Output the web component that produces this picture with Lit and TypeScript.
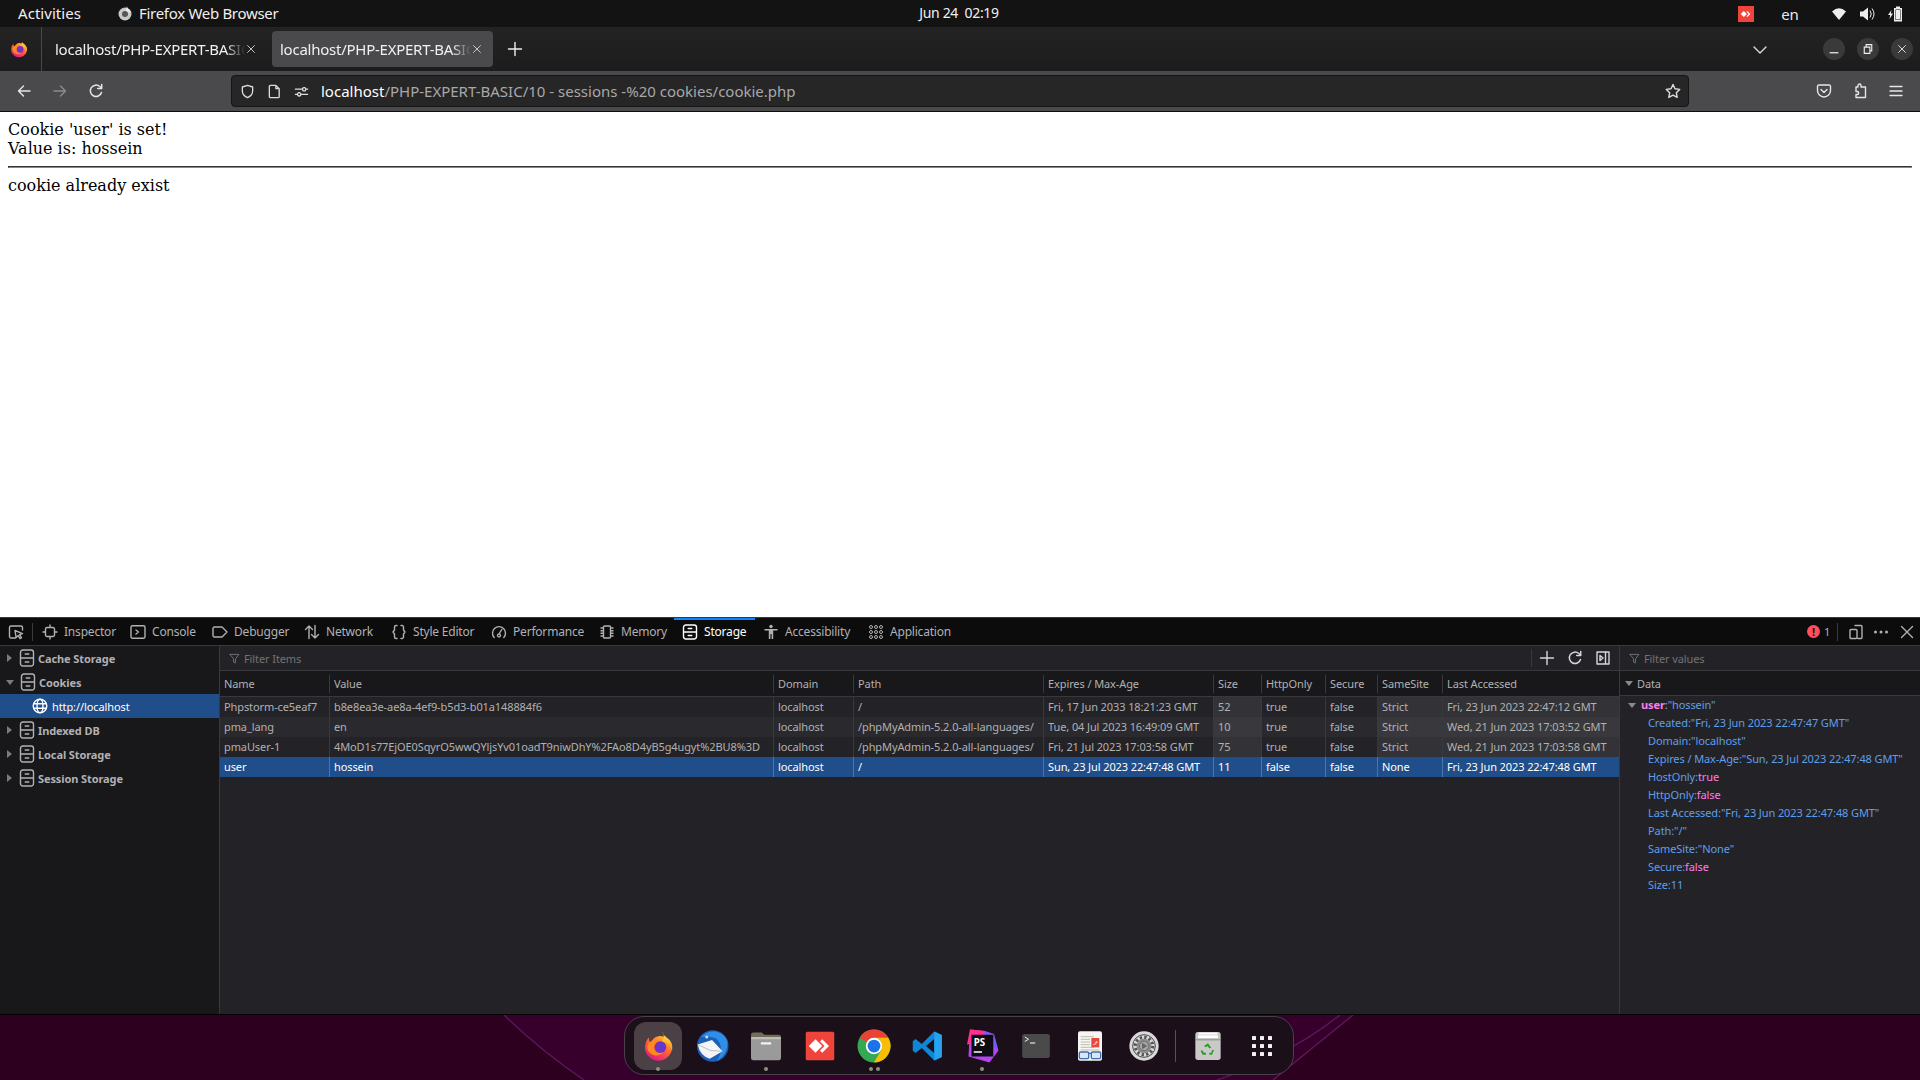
import { LitElement, html, css } from "lit";
import { customElement } from "lit/decorators.js";

const S = (d: string) => html`<svg class="ic" viewBox="0 0 16 16" fill="none" stroke="currentColor" stroke-width="1.4" stroke-linecap="round" stroke-linejoin="round"><path d=${d}></path></svg>`;

const icons: Record<string, any> = {
  pick: S("M7.5 14H3A1.5 1.5 0 0 1 1.500 12.500V3.500A1.500 1.500 0 0 1 3 2h10a1.500 1.500 0 0 1 1.500 1.500V6M7 6.500l7.500 3.200-3 1 2 3-1.400.9-2-3-2 1.900z"),
  inspector: S("M8 1v2.500M8 12.500V15M1 8h2.500M12.500 8H15M5 3.500h6A1.500 1.500 0 0 1 12.500 5v6a1.500 1.500 0 0 1-1.500 1.500H5A1.500 1.500 0 0 1 3.500 11V5A1.500 1.500 0 0 1 5 3.500z"),
  console: S("M2.500 1.800h11a1.500 1.500 0 0 1 1.500 1.500v9.400a1.500 1.500 0 0 1-1.500 1.500h-11A1.500 1.500 0 0 1 1 12.700V3.300a1.500 1.500 0 0 1 1.500-1.500zM6 6l2.500 2L6 10"),
  debugger: S("M2.500 3h7.500l5 5-5 5H2.500a1.500 1.500 0 0 1-1.500-1.500v-7A1.500 1.500 0 0 1 2.500 3z"),
  network: S("M5 14.500V2M1.500 5.500L5 2l3.500 3.500M11 1.500V14M7.500 10.500L11 14l3.500-3.500"),
  style: S("M6 1.500H5a1.500 1.500 0 0 0-1.500 1.500v3L2 8l1.500 2v3A1.500 1.500 0 0 0 5 14.500h1M10 1.500h1A1.500 1.500 0 0 1 12.500 3v3L14 8l-1.500 2v3a1.500 1.500 0 0 1-1.500 1.500h-1"),
  perf: S("M3.200 13.500A6.500 6.500 0 1 1 12.800 13.500M8 10l2.800-4.500M8 10a1.500 1.500 0 1 0 .01 0"),
  memory: S("M5.500 2h5a1 1 0 0 1 1 1v10a1 1 0 0 1-1 1h-5a1 1 0 0 1-1-1V3a1 1 0 0 1 1-1zM2 4h2.500M2 6.700h2.500M2 9.300h2.500M2 12h2.500M11.500 4H14M11.500 6.700H14M11.500 9.300H14M11.500 12H14"),
  storage: S("M3.800 1h8.400a2.300 2.300 0 0 1 2.300 2.300v9.400a2.300 2.300 0 0 1-2.300 2.300H3.800a2.300 2.300 0 0 1-2.300-2.300V3.300A2.300 2.300 0 0 1 3.800 1zM1.500 8h13M6.200 4.500h3.600M6.200 11.500h3.600"),
  app: html`<svg class="ic" viewBox="0 0 16 16" fill="none" stroke="currentColor" stroke-width="1">${[3, 8, 13].map((y) => [3, 8, 13].map((x) => html`<svg x=${x - 2} y=${y - 2} width="4" height="4" viewBox="0 0 4 4" overflow="visible"><circle cx="2" cy="2" r="1.500"></circle></svg>`))}</svg>`,
  access: html`<svg class="ic" viewBox="0 0 16 16" fill="currentColor"><circle cx="8" cy="2.500" r="1.700"></circle><path d="M1.500 5h13v1.500H10.200V15H8.600v-5H7.400v5H5.800V6.500H1.500z"></path></svg>`,
  funnel: S("M1.500 2h13L9.800 8 9 14.500l-2-1L6.300 8z"),
  reload: html`<svg class="ic" viewBox="0 0 16 16" fill="none" stroke="currentColor" stroke-width="1.500" stroke-linecap="round"><path d="M13.500 9.500A5.700 5.700 0 1 1 11.800 3.500l1.700 1.500"></path><path d="M13.700 1.500v4h-4" stroke-linejoin="round"></path></svg>`,
  plus: S("M8 1.500v13M1.500 8h13"),
  panel: S("M2 2h12v12H2zM10.500 2v12M5 5.500l3 2.500-3 2.500z"),
  device: S("M7 1.500h6a1 1 0 0 1 1 1v11a1 1 0 0 1-1 1h-3M3 5.500h5a1 1 0 0 1 1 1v7a1 1 0 0 1-1 1H3a1 1 0 0 1-1-1v-7a1 1 0 0 1 1-1z"),
  close: S("M2.500 2.500l11 11M13.500 2.500l-11 11"),
  back: S("M14 8H2.500M7.500 3l-5 5 5 5"),
  fwd: S("M2 8h11.500M8.500 3l5 5-5 5"),
  shield: S("M8 1.500l5.500 1.700v4.300c0 3.500-2.500 5.800-5.500 7-3-1.200-5.500-3.500-5.500-7V3.200z"),
  page: S("M3.500 1.500h6l3.500 3.500v8.500a1 1 0 0 1-1 1h-8.500a1 1 0 0 1-1-1v-11a1 1 0 0 1 1-1zM9.500 1.500V5H13"),
  perm: S("M1.500 5.500h7M13 5.500h1.500M1.500 11h1.500M8 11h6.500M10.800 3.800a1.800 1.800 0 1 0 .01 0M5.500 9.200a1.800 1.800 0 1 0 .01 0"),
  star: S("M8 1.500l2 4.300 4.700.6-3.400 3.300.9 4.700L8 12.100l-4.200 2.300.9-4.700L1.300 6.400 6 5.800z"),
  pocket: S("M2.800 2h10.400A1.300 1.300 0 0 1 14.500 3.300V7.500A6.500 6.500 0 0 1 1.500 7.500V3.300A1.300 1.300 0 0 1 2.800 2zM5 6.500l3 3 3-3"),
  ext: S("M6 2.500a1.500 1.500 0 0 1 3 0V4h4.500v10.500H4V11.500H5.200a1.500 1.500 0 0 0 0-3H4V4h2z"),
  burger: S("M2 3.500h12M2 8h12M2 12.500h12"),
  chev: S("M2 5l6 6 6-6"),
  globe: html`<svg class="ic" viewBox="0 0 16 16" fill="none" stroke="#fff" stroke-width="1.400"><circle cx="8" cy="8" r="6.800"></circle><ellipse cx="8" cy="8" rx="3" ry="6.800"></ellipse><path d="M1.500 5.700h13M1.500 10.300h13"></path></svg>`,
};

const firefox = (cls: string) => html`<svg class=${cls} viewBox="0 0 48 48">
  <defs>
    <linearGradient id="fxa" x1="0.85" y1="0.1" x2="0.3" y2="1"><stop offset="0" stop-color="#ffb72b"></stop><stop offset="0.5" stop-color="#ff5a3c"></stop><stop offset="1" stop-color="#e31587"></stop></linearGradient>
    <linearGradient id="fxb" x1="0.5" y1="0" x2="0.5" y2="1"><stop offset="0" stop-color="#ffe14a"></stop><stop offset="1" stop-color="#ff9a1f"></stop></linearGradient>
  </defs>
  <path d="M24 8C35 7 45 15 45 26C45 37 35 46 24 46C13 46 3 37 3 26C3 20 5 14 9 10C9 14 10 17 12 18C14 13 18 9 24 8Z" fill="url(#fxa)"></path>
  <path d="M30 1C31 8 38 9 42 15C45 19 46 24 45 30C42 22 36 17 29 16C33 12 33 6 30 1Z" fill="url(#fxb)"></path>
  <circle cx="27" cy="25" r="9" fill="#6a35c9"></circle>
  <path d="M7 22C10 15 18 12 26 15C20 16 17 20 17 25C17 32 24 36 31 33C26 40 14 39 9 32C7 29 6 25 7 22Z" fill="#ff8a1f"></path>
</svg>`;

const dock: Record<string, any> = {
  thunderbird: html`<svg class="di" viewBox="0 0 48 48"><circle cx="25" cy="24" r="21" fill="#1d5fb8"></circle><path d="M10 12C18 2 36 1 44 16C46 26 42 38 30 44C38 34 38 22 30 14C22 10 14 12 10 12Z" fill="#2f8fe6"></path><path d="M5 22L24 16L38 31L21 41Q8 37 5 22Z" fill="#f4f4f4"></path><path d="M5 22L22 30L38 31" fill="none" stroke="#aab" stroke-width="1"></path><circle cx="17" cy="12" r="2" fill="#cde"></circle></svg>`,
  folder: html`<svg class="di" viewBox="0 0 48 48"><path d="M4 9a3 3 0 0 1 3-3h11l4 3h19a3 3 0 0 1 3 3v10H4z" fill="#6f6e58"></path><rect x="4" y="12" width="40" height="31" rx="3" fill="#9a9a9a"></rect><rect x="4" y="12" width="40" height="3" rx="1.500" fill="#bdbdb8"></rect><rect x="17" y="19" width="14" height="3" rx="1" fill="#f2f2f2"></rect></svg>`,
  anydesk: html`<svg class="di" viewBox="0 0 48 48"><rect x="5" y="5" width="38" height="38" rx="2" fill="#ef443b"></rect><path d="M18 15L27 24L18 33L9 24Z" fill="#fff"></path><path d="M27 15L36 24L27 33L24 30L30 24L24 18Z" fill="#fff"></path></svg>`,
  chrome: html`<svg class="di" viewBox="0 0 48 48"><circle cx="24" cy="24" r="22" fill="#34a853"></circle><path d="M24 2A22 22 0 0 1 43.100 13H24A11 11 0 0 0 14.500 18.500L5 13A22 22 0 0 1 24 2Z" fill="#ea4335"></path><path d="M43.100 13A22 22 0 0 1 24 46L33.500 29.500A11 11 0 0 0 33.500 18.500 11 11 0 0 0 24 13Z" fill="#fbbc05"></path><circle cx="24" cy="24" r="11" fill="#fff"></circle><circle cx="24" cy="24" r="8.500" fill="#1a73e8"></circle></svg>`,
  vscode: html`<svg class="di" viewBox="-2 -2 52 52"><path d="M33 3L44 8V40L33 45L15 27L6 34L2 31V17L6 14L15 21ZM33 14L21 24L33 34Z" fill="#0f86d6" fill-rule="evenodd"></path><path d="M33 3L44 8V40L33 45Z" fill="#25a3ee"></path></svg>`,
  phpstorm: html`<svg class="di" viewBox="0 0 48 48"><path d="M8 2L28 4L46 30L34 46L6 38Z" fill="#b345f1"></path><path d="M8 2L28 4L20 20L4 22Z" fill="#ff318c"></path><path d="M28 4L40 8L46 30L30 20Z" fill="#765af8"></path><rect x="10" y="9" width="29" height="29" fill="#0c0c12"></rect><text x="13" y="24" font-family="Noto Sans, sans-serif" font-size="13" font-weight="700" fill="#fff">PS</text><rect x="13" y="31" width="11" height="2" fill="#fff"></rect></svg>`,
  terminal: html`<svg class="di" viewBox="0 0 48 48"><rect x="5.500" y="8" width="37" height="32" rx="3" fill="#4a4a4a"></rect><path d="M9 12l5 3-5 3" fill="none" stroke="#eee" stroke-width="1.300"></path><path d="M16 20h7" stroke="#eee" stroke-width="1.500"></path></svg>`,
  gedit: html`<svg class="di" viewBox="-3 -3 54 54"><rect x="6" y="2" width="36" height="44" rx="3" fill="#f5f5f3"></rect><path d="M10 10h20M10 14h14M10 18h14M10 22h14M10 26h20M10 30h28" stroke="#b9b3a2" stroke-width="1.300"></path><rect x="26" y="12" width="12" height="14" fill="#e5493e"></rect><path d="M29 22q5-1 6-4q-2-2-3 1" fill="none" stroke="#fff" stroke-width="1.200"></path><rect x="8" y="33" width="14" height="10" rx="2" fill="#dbe6f2" stroke="#3f6fb0" stroke-width="2"></rect><rect x="26" y="33" width="14" height="10" rx="2" fill="#dbe6f2" stroke="#3f6fb0" stroke-width="2"></rect><path d="M22 35h4" stroke="#3f6fb0" stroke-width="2"></path></svg>`,
  settings: html`<svg class="di" viewBox="-3 -3 54 54"><circle cx="24" cy="24" r="22" fill="#d9d9d9"></circle><circle cx="24" cy="24" r="17" fill="none" stroke="#4a4a4a" stroke-width="1.500"></circle><circle cx="24" cy="24" r="13" fill="none" stroke="#555" stroke-width="5" stroke-dasharray="3.500 3.300"></circle><circle cx="24" cy="24" r="11" fill="#8c8c8c"></circle><circle cx="24" cy="24" r="7" fill="#a8a8a8" stroke="#666" stroke-width="1.200"></circle><path d="M21 19l8 5-8 5z" fill="#666"></path></svg>`,
  trash: html`<svg class="di" viewBox="-3 -3 54 54"><rect x="5" y="3" width="38" height="42" rx="4" fill="#c9c9c7"></rect><rect x="10" y="4" width="28" height="3" fill="#fafafa"></rect><rect x="9" y="8" width="30" height="4" fill="#fff"></rect><rect x="5" y="14" width="38" height="1.500" fill="#8a8a88"></rect><path d="M24 20l5 7-3 .5-3-3.500-2 2-3-2zM33 30l-3 7h-4v-3h3l1-4zM15 30l3 4h3v3h-5l-3-5z" fill="#2f9a2a"></path></svg>`,
  grid: html`<svg class="di" viewBox="0 0 36 36" fill="#f1f1f1">${[8, 16, 24].map((y) => [8, 16, 24].map((x) => html`<svg x=${x} y=${y} width="4" height="4" viewBox="0 0 4 4" overflow="visible"><rect width="4" height="4" rx=".6"></rect></svg>`))}</svg>`,
};

const tools: [string, string][] = [
  ["inspector", "Inspector"], ["console", "Console"], ["debugger", "Debugger"], ["network", "Network"], ["style", "Style Editor"],
  ["perf", "Performance"], ["memory", "Memory"], ["storage", "Storage"], ["access", "Accessibility"], ["app", "Application"],
];
const side: [string, boolean][] = [["Cache Storage", false], ["Cookies", true]];
const side2 = ["Indexed DB", "Local Storage", "Session Storage"];
const cols = ["Name", "Value", "Domain", "Path", "Expires / Max-Age", "Size", "HttpOnly", "Secure", "SameSite", "Last Accessed"];
const rows = [
  ["Phpstorm-ce5eaf7", "b8e8ea3e-ae8a-4ef9-b5d3-b01a148884f6", "localhost", "/", "Fri, 17 Jun 2033 18:21:23 GMT", "52", "true", "false", "Strict", "Fri, 23 Jun 2023 22:47:12 GMT"],
  ["pma_lang", "en", "localhost", "/phpMyAdmin-5.2.0-all-languages/", "Tue, 04 Jul 2023 16:49:09 GMT", "10", "true", "false", "Strict", "Wed, 21 Jun 2023 17:03:52 GMT"],
  ["pmaUser-1", "4MoD1s77EjOE0SqyrO5wwQYljsYv01oadT9niwDhY%2FAo8D4yB5g4ugyt%2BU8%3D", "localhost", "/phpMyAdmin-5.2.0-all-languages/", "Fri, 21 Jul 2023 17:03:58 GMT", "75", "true", "false", "Strict", "Wed, 21 Jun 2023 17:03:58 GMT"],
  ["user", "hossein", "localhost", "/", "Sun, 23 Jul 2023 22:47:48 GMT", "11", "false", "false", "None", "Fri, 23 Jun 2023 22:47:48 GMT"],
];
const data: [string, string, boolean][] = [
  ["Created", '"Fri, 23 Jun 2023 22:47:47 GMT"', false],
  ["Domain", '"localhost"', false],
  ["Expires / Max-Age", '"Sun, 23 Jul 2023 22:47:48 GMT"', false],
  ["HostOnly", "true", true],
  ["HttpOnly", "false", true],
  ["Last Accessed", '"Fri, 23 Jun 2023 22:47:48 GMT"', false],
  ["Path", '"/"', false],
  ["SameSite", '"None"', false],
  ["Secure", "false", true],
  ["Size", "11", false],
];
const dockIds = ["thunderbird", "folder", "anydesk", "chrome", "vscode", "phpstorm", "terminal", "gedit", "settings"];
const dots: Record<string, number> = { folder: 1, chrome: 2, phpstorm: 1 };

@customElement("app-root")
export class AppRoot extends LitElement {
  static styles = css`
    :host { display: flex; flex-direction: column; width: 1920px; height: 1080px; overflow: hidden; font-family: "Noto Sans", sans-serif; }
    * { box-sizing: border-box; }
    .ic { width: 16px; height: 16px; flex: none; display: block; }

    .top { height: 27px; flex: none; background: #131313; color: #f0f0f0; font-size: 15px; letter-spacing: -.3px; display: grid; grid-template-columns: 99px 170px 1fr; align-items: center; position: relative; padding: 0 0 2px 18px; }
    .top .act { letter-spacing: .05px; }
    .top .app { display: flex; align-items: center; gap: 6px; }
    .ffm { width: 16px; height: 16px; }
    .clock { position: absolute; left: 0; right: 2px; top: 3px; text-align: center; pointer-events: none; font-size: 14px; letter-spacing: -.35px; }
    .tray { position: absolute; top: 0; right: 0; height: 27px; }
    .tray-in { display: grid; grid-template-columns: 16px 72px 26px 30px 26px; padding-right: 12px; align-items: center; height: 27px; justify-items: center; }
    .red { width: 16px; height: 16px; background: #ef443b; display: flex; align-items: center; justify-content: center; }
    .red svg { width: 14px; height: 14px; }
    .en { font-size: 15px; letter-spacing: 0; color: #e8e8e8; }
    .tray-in svg.t { width: 16px; height: 16px; color: #eee; display: block; }

    .tabs { height: 44px; flex: none; background: linear-gradient(#232323, #1c1c1e); display: flex; align-items: center; color: #f0f0f0; position: relative; }
    .ffslot { width: 42px; height: 44px; border-right: 1px solid #4a4a4a; display: flex; align-items: center; justify-content: center; padding-right: 3px; flex: none; }
    .ffslot svg { width: 18px; height: 18px; }
    .tab { width: 221px; height: 36px; border-radius: 4px; display: flex; align-items: center; padding: 0 11px 0 8px; font-size: 15px; letter-spacing: -.25px; flex: none; margin-right: 5px; }
    .tab.first { width: 225px; padding-left: 13px; }
    .tab.on { background: #4a4a4c; }
    .tab .t { flex: 1; overflow: hidden; white-space: nowrap; -webkit-mask-image: linear-gradient(90deg, #000 90%, transparent); mask-image: linear-gradient(90deg, #000 90%, transparent); }
    .tab .ic { width: 10px; height: 10px; color: #ddd; margin-left: 1px; }
    .newtab { width: 16px; height: 16px; margin-left: 9px; color: #eee; }
    .tabs .right { margin-left: auto; display: flex; align-items: center; gap: 12px; padding-right: 7px; }
    .chev { width: 14px; height: 14px; color: #ddd; margin-right: 45px; }
    .wc { width: 22px; height: 22px; border-radius: 50%; background: #3a3a3a; display: flex; align-items: center; justify-content: center; }
    .wc svg { width: 10px; height: 10px; color: #eee; }

    .bar { height: 41px; flex: none; background: #4a4a4c; border-bottom: 1px solid #0c0c0d; display: flex; align-items: center; color: #e6e6e6; }
    .nav { width: 231px; flex: none; display: grid; grid-template-columns: 36px 36px 36px; padding-left: 6px; justify-items: center; }
    .nav .dim { color: #8a8a8c; }
    .url { width: 1458px; height: 32px; flex: none; background: #262626; border: 1px solid #151515; border-radius: 4px; display: flex; align-items: center; padding-left: 8px; font-size: 15px; }
    .url .ic { width: 15px; height: 15px; color: #ddd; }
    .url .ic + .ic { margin-left: 12px; }
    .url .txt { margin-left: 12px; color: #fff; white-space: nowrap; }
    .url .txt span { color: #a8a8aa; }
    .url .star { margin-left: auto; margin-right: 7px; width: 16px; height: 16px; }
    .url .star .ic { width: 16px; height: 16px; }
    .barr { flex: 1; display: grid; grid-template-columns: 36px 36px 36px; justify-items: center; padding-left: 117px; }

    .page { height: 505px; flex: none; background: #fff; color: #000; font-family: "DejaVu Serif", serif; font-size: 16px; padding: 8px; line-height: 19px; }
    .page hr { margin: 8px 0; border: 1px inset #888; height: 2px; }

    .dev { height: 398px; flex: none; background: #232327; display: flex; flex-direction: column; font-size: 11px; color: #b1b1b3; border-top: 1px solid #38383d; border-bottom: 1px solid #000; letter-spacing: -.1px; }
    .dt { height: 28px; flex: none; background: #0c0c0d; border-bottom: 1px solid #38383d; display: flex; align-items: center; position: relative; }
    .dt .pk { width: 34px; flex: none; height: 16px; padding-left: 8px; position: relative; }
    .dt .pk::after { content: ""; position: absolute; right: 1px; top: -1px; width: 1px; height: 18px; background: #38383d; }
    .dtabs { display: grid; grid-template-columns: 88px 82px 92px 87px 100px 108px 83px 81px 105px 99px; height: 100%; }
    .dtab { display: flex; align-items: center; padding-left: 8px; gap: 6px; position: relative; font-size: 12px; letter-spacing: -.2px; white-space: nowrap; }
    .dtab.on { color: #fff; }
    .dtab.on::before { content: ""; position: absolute; left: 0; right: 0; top: 0; height: 2px; background: #0a84ff; }
    .dtr { margin-left: auto; display: flex; align-items: center; height: 100%; }
    .err { width: 13px; height: 13px; border-radius: 50%; background: #ff4f5e; color: #0c0c0d; font-size: 11px; font-weight: 700; display: flex; align-items: center; justify-content: center; line-height: 1; }
    .cnt { margin-left: 4px; width: 13px; }
    .vs { width: 1px; height: 18px; background: #38383d; }
    .dtr .ic { margin-left: 10px; }
    .dtr .end { width: 5px; }
    .dotsv { width: 16px; height: 16px; margin-left: 9px; }

    .body { flex: 1; display: flex; min-height: 0; }
    .side { width: 220px; flex: none; background: #18181a; border-right: 1px solid #38383d; }
    .sr { height: 24px; display: flex; align-items: center; font-weight: 700; font-size: 11px; padding-left: 7px; }
    .sr .ar { width: 0; height: 0; border-style: solid; border-width: 4px 0 4px 5px; border-color: transparent transparent transparent #7a7a7c; margin-right: 7px; }
    .sr .ar.open { border-width: 5px 4px 0 4px; border-color: #7a7a7c transparent transparent transparent; margin-left: -1px; margin-right: 6px; }
    .sr .ic { margin-right: 3px; transform: scaleY(1.15); }
    .sr.sel { background: #204e8a; color: #fff; padding-left: 32px; font-weight: 400; }
    .sr.sel .ic { margin-right: 4px; transform: none; }
    .main { width: 1400px; flex: none; border-right: 1px solid #38383d; display: flex; flex-direction: column; }
    .fb { height: 25px; flex: none; border-bottom: 1px solid #38383d; display: flex; align-items: center; padding-left: 9px; color: #737373; gap: 4px; }
    .fb .ic { width: 11px; height: 11px; }
    .fb .tools { margin-left: auto; display: flex; align-items: center; height: 100%; color: #d7d7db; padding-right: 8px; }
    .fb .tools .ic { width: 16px; height: 16px; color: #d7d7db; }
    .fb .tools .vs { margin-right: 7px; }
    .fb .tools .ic + .ic { margin-left: 12px; }
    .hrow, .row { display: grid; grid-template-columns: 109px 444px 80px 190px 170px 48px 64px 52px 65px 177px; white-space: nowrap; }
    .hrow { height: 26px; background: #18181a; border-bottom: 1px solid #38383d; align-items: center; flex: none; color: #b1b1b3; }
    .hrow div { height: 18px; line-height: 17px; padding-left: 4px; border-left: 1px solid #38383d; }
    .hrow div:first-child { border-left: 0; }
    .row { height: 20px; line-height: 20px; }
    .row div { padding-left: 4px; border-left: 1px solid #38383d; overflow: hidden; }
    .row div:first-child { border-left: 0; }
    .row.alt { background: #2a2a2e; }
    .row .sh { background: rgba(255, 255, 255, .075); }
    .row.sel { background: #204e8a; color: #fff; }
    .row.sel div { border-left-color: #4a74ac; }
    .row.sel .sh { background: none; }
    .rp { flex: 1; display: flex; flex-direction: column; min-width: 0; }
    .rp .fb { padding-left: 9px; }
    .dh { height: 25px; flex: none; background: #18181a; border-bottom: 1px solid #38383d; display: flex; align-items: center; padding-left: 5px; gap: 4px; }
    .tri { width: 0; height: 0; border-style: solid; border-width: 5px 4px 0 4px; border-color: #8a8a8c transparent transparent transparent; }
    .tr { height: 18px; line-height: 18px; padding-left: 28px; white-space: nowrap; }
    .tr.root { padding-left: 8px; display: flex; align-items: center; gap: 5px; }
    .k { color: #75bfff; }
    .kk { color: #ff7de9; font-weight: 700; }
    .s { color: #5e9fea; }
    .key2 { color: #5e9fea; }
    .b { color: #ff7de9; }

    .wall { height: 65px; flex: none; background: #2c001e; position: relative; display: flex; justify-content: center; padding-right: 2px; }
    .wall .bg { position: absolute; inset: 0; width: 100%; height: 100%; }
    .dock { position: relative; margin-top: 1px; width: 670px; height: 59px; background: #1b1019; border: 1px solid #4a404a; border-radius: 20px; display: flex; align-items: flex-start; padding: 5px 0 0 9px; }
    .slot { width: 54px; height: 48px; border-radius: 12px; display: flex; align-items: center; justify-content: center; position: relative; flex: none; }
    .slot.on { background: #4a4046; width: 48px; margin-right: 3px; }
    .di { width: 36px; height: 36px; display: block; }
    .fx { width: 31px; height: 31px; }
    .dot { position: absolute; bottom: -1px; width: 4px; height: 4px; border-radius: 50%; background: #8f8f80; }
    .dots { position: absolute; bottom: -1px; display: flex; gap: 3px; }
    .dots i { width: 4px; height: 4px; border-radius: 50%; background: #8f8f80; display: block; }
    .dsep { width: 1px; height: 32px; background: #5a505a; margin: 8px 5px 0 4px; flex: none; }
  `;

  render() {
    return html`
      <div class="top">
        <span class="act">Activities</span>
        <span class="app"><svg class="ffm" viewBox="0 0 16 16"><circle cx="8" cy="9" r="6.500" fill="#c9c9c9"></circle><path d="M10 1c0 3 3 3 4 6l-6 1z" fill="#e8e8e8"></path><circle cx="8" cy="9" r="3" fill="#555"></circle></svg><span>Firefox Web Browser</span></span>
        <span class="clock">Jun 24&nbsp; 02:19</span>
        <div class="tray"><div class="tray-in">
          <span class="red"><svg viewBox="0 0 16 16" fill="#fff"><path d="M5.500 4.500L9 8 5.500 11.500 2 8zM9.500 4.500L13 8 9.500 11.500 8.500 10.500 11 8 8.500 5.500z"></path></svg></span>
          <span class="en">en</span>
          <svg class="t" viewBox="0 0 16 16" fill="currentColor"><path d="M1 5.500Q8-1 15 5.500L8 14z"></path></svg>
          <svg class="t" viewBox="0 0 16 16" fill="currentColor"><path d="M1 5.500h3L9 1.500v13L4 10.500H1z"></path><path d="M11 4.500q2.500 3.500 0 7M13 2.500q4 5.500 0 11" fill="none" stroke="currentColor"></path></svg>
          <svg class="t" viewBox="0 0 16 16" fill="currentColor"><path d="M9 0.500h4v1.500h2v13.500H7V2h2zM8.500 3.500v10.500h5V3.500z" fill-rule="evenodd"></path><rect x="9" y="4" width="4" height="9.500"></rect><path d="M4.500 4L1 9h2.200L2.500 13 6 7.500H3.800z"></path></svg>
        </div></div>
      </div>
      <div class="tabs">
        <div class="ffslot">${firefox("")}</div>
        <div class="tab first"><span class="t">localhost/PHP-EXPERT-BASIC</span>${icons.close}</div>
        <div class="tab on"><span class="t">localhost/PHP-EXPERT-BASIC</span>${icons.close}</div>
        <span class="newtab">${icons.plus}</span>
        <div class="right">
          <span class="chev">${icons.chev}</span>
          <span class="wc"><svg viewBox="0 0 16 16" stroke="currentColor" stroke-width="2"><path d="M1 14h14"></path></svg></span>
          <span class="wc"><svg viewBox="0 0 16 16" fill="none" stroke="currentColor" stroke-width="1.800"><path d="M2 5h9v10H2zM5 5V1h9v10h-3"></path></svg></span>
          <span class="wc">${icons.close}</span>
        </div>
      </div>
      <div class="bar">
        <div class="nav"><span>${icons.back}</span><span class="dim">${icons.fwd}</span><span>${icons.reload}</span></div>
        <div class="url">${icons.shield}${icons.page}${icons.perm}<span class="txt">localhost<span>/PHP-EXPERT-BASIC/10 - sessions -%20 cookies/cookie.php</span></span><span class="star">${icons.star}</span></div>
        <div class="barr"><span>${icons.pocket}</span><span>${icons.ext}</span><span>${icons.burger}</span></div>
      </div>
      <div class="page">Cookie 'user' is set!<br />Value is: hossein<hr />cookie already exist</div>
      <div class="dev">
        <div class="dt">
          <span class="pk">${icons.pick}</span>
          <div class="dtabs">${tools.map(([i, t]) => html`<div class="dtab ${i === "storage" ? "on" : ""}">${icons[i]}<span>${t}</span></div>`)}</div>
          <div class="dtr">
            <span class="err">!</span><span class="cnt">1</span><span class="vs"></span>${icons.device}
            <svg class="dotsv" viewBox="0 0 16 16" fill="currentColor"><circle cx="2.500" cy="8" r="1.500"></circle><circle cx="8" cy="8" r="1.500"></circle><circle cx="13.500" cy="8" r="1.500"></circle></svg>
            ${icons.close}<span class="end"></span>
          </div>
        </div>
        <div class="body">
          <div class="side">
            ${side.map(([t, open]) => html`<div class="sr"><span class="ar ${open ? "open" : ""}"></span>${icons.storage}<span>${t}</span></div>`)}
            <div class="sr sel">${icons.globe}<span>http://localhost</span></div>
            ${side2.map((t) => html`<div class="sr"><span class="ar"></span>${icons.storage}<span>${t}</span></div>`)}
          </div>
          <div class="main">
            <div class="fb">${icons.funnel}<span>Filter Items</span>
              <div class="tools"><span class="vs"></span>${icons.plus}${icons.reload}${icons.panel}</div>
            </div>
            <div class="hrow">${cols.map((c) => html`<div>${c}</div>`)}</div>
            ${rows.map((r, i) => html`<div class="row ${i === 1 ? "alt" : ""} ${i === 3 ? "sel" : ""}">${r.map((c, j) => html`<div class=${j === 5 || j >= 8 ? "sh" : ""}>${c}</div>`)}</div>`)}
          </div>
          <div class="rp">
            <div class="fb">${icons.funnel}<span>Filter values</span></div>
            <div class="dh"><span class="tri"></span><span>Data</span></div>
            <div class="tree">
              <div class="tr root"><span class="tri"></span><span><span class="kk">user</span><span class="k">:</span><span class="s">"hossein"</span></span></div>
              ${data.map(([k, v, b]) => html`<div class="tr"><span class="key2">${k}:</span><span class=${b ? "b" : "s"}>${v}</span></div>`)}
            </div>
          </div>
        </div>
      </div>
      <div class="wall">
        <svg class="bg" viewBox="0 0 1920 65" preserveAspectRatio="none">
          <path d="M504 0Q540 35 584 65H1273Q1310 35 1353 0Z" fill="#37002c"></path>
          <path d="M504 0Q540 35 584 65M1353 0Q1310 35 1273 65M1340 0Q1290 40 1217 65" stroke="#5c1a5c" stroke-width="1.300" fill="none"></path>
        </svg>
        <div class="dock">
          <div class="slot on">${firefox("fx")}<span class="dot"></span></div>
          ${dockIds.map((id) => html`<div class="slot">${dock[id]}${dots[id] === 2 ? html`<span class="dots"><i></i><i></i></span>` : dots[id] ? html`<span class="dot"></span>` : ""}</div>`)}
          <span class="dsep"></span>
          <div class="slot">${dock.trash}</div>
          <div class="slot">${dock.grid}</div>
        </div>
      </div>
    `;
  }
}
